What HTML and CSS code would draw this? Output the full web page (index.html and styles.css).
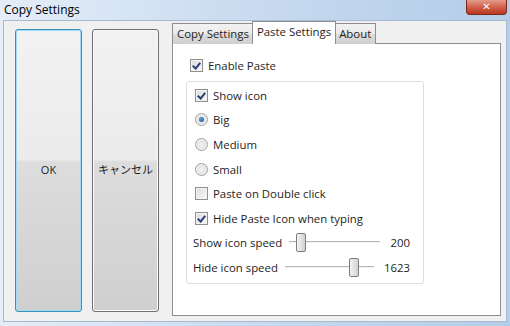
FILE: index.html
```html
<!DOCTYPE html>
<html lang="ja">
<head>
<meta charset="UTF-8" />
<title>Copy Settings</title>
<link rel="stylesheet" href="styles.css">
</head>
<body>
<div class="ventana">
  <div class="titulo">
    <span class="titulo-texto">Copy Settings</span>
    <span class="cerrar">&#x2715;</span>
  </div>

  <div class="cliente">
    <div class="botones">
      <div class="boton foco"><span>OK</span></div>
      <div class="boton"><span>キャンセル</span></div>
    </div>

    <div class="tabs">
      <div class="tab-barra">
        <div class="tab">Copy Settings</div>
        <div class="tab activa">Paste Settings</div>
        <div class="tab">About</div>
      </div>
      <div class="panel">
        <label class="opcion principal"><span class="check marcado"></span>Enable Paste</label>
        <div class="grupo">
          <label class="opcion"><span class="check marcado"></span>Show icon</label>
          <label class="opcion"><span class="radio marcado"></span>Big</label>
          <label class="opcion"><span class="radio"></span>Medium</label>
          <label class="opcion"><span class="radio"></span>Small</label>
          <label class="opcion"><span class="check"></span>Paste on Double click</label>
          <label class="opcion"><span class="check marcado"></span>Hide Paste Icon when typing</label>
          <div class="fila-slider">
            <span class="etiqueta">Show icon speed</span>
            <div class="slider"><span class="pista"></span><span class="pulgar" style="left: 8%"></span></div>
            <span class="valor">200</span>
          </div>
          <div class="fila-slider">
            <span class="etiqueta">Hide icon speed</span>
            <div class="slider"><span class="pista"></span><span class="pulgar" style="left: 72%"></span></div>
            <span class="valor">1623</span>
          </div>
        </div>
      </div>
    </div>
  </div>
</div>
</body>
</html>
```

FILE: styles.css
```css
body {
  margin: 0;
  font-family: "Open Sans", "Noto Sans CJK JP", sans-serif;
  font-size: 11.4px;
  color: #1e1e1e;
  background: #c9dbef;
}
.ventana {
  width: 510px;
  height: 326px;
  display: flex;
  flex-direction: column;
  background: linear-gradient(to right, #e4edf8, #c3d7ee 60%, #b4cde9);
}
.titulo {
  height: 20px;
  display: flex;
  justify-content: space-between;
  align-items: flex-start;
  padding-left: 4px;
  padding-right: 3px;
}
.titulo-texto {
  font-size: 12px;
  line-height: 19px;
  color: #000;
}
.cerrar {
  width: 39px;
  height: 14px;
  border: 1px solid #7d2a1e;
  border-top: none;
  border-radius: 0 0 4px 4px;
  background: linear-gradient(#e49b8c, #d2614b 50%, #b8371f);
  color: #fff;
  font-size: 10px;
  font-weight: bold;
  line-height: 13px;
  text-align: center;
  font-family: "DejaVu Sans", sans-serif;
}

/* area cliente */
.cliente {
  flex: 1;
  margin: 0 3px 4px 3px;
  border: 1px solid #a9bace;
  background: #f0f0f0;
  display: flex;
  padding: 8px 5px 5px 11px;
}
.botones {
  display: flex;
  gap: 10px;
  margin-right: 13px;
}
.boton {
  width: 65px;
  height: 281px;
  border: 1px solid #707070;
  border-radius: 3px;
  background: linear-gradient(#f2f2f2, #ebebeb 46%, #dddddd 47%, #cfcfcf);
  display: flex;
  align-items: center;
  justify-content: center;
  font-size: 11px;
  padding-bottom: 3px;
  box-sizing: content-box;
  height: 278px;
  box-shadow: inset 0 0 0 1px #fafafa;
}
.boton.foco {
  border-color: #3c8fb6;
  box-shadow: inset 0 0 0 1px #9fdcf5;
}

/* pestañas */
.tabs {
  width: 329px;
  display: flex;
  flex-direction: column;
  margin-top: -8px;
}
.tab-barra {
  display: flex;
  height: 23px;
  align-items: flex-end;
  margin-bottom: -1px;
  position: relative;
  z-index: 1;
}
.tab {
  height: 20px;
  line-height: 20px;
  padding: 0 4px;
  border: 1px solid #8c8e94;
  border-bottom: none;
  margin-right: -1px;
  background: linear-gradient(#f2f2f2, #ebebeb 50%, #dddddd 51%, #cfcfcf);
}
.tab.activa {
  height: 22px;
  line-height: 20px;
  padding: 0 4px;
  background: #fff;
  margin-left: -1px;
  margin-right: -2px;
  position: relative;
  z-index: 2;
}
.panel {
  flex: 1;
  background: #fff;
  border: 1px solid #8c8e94;
  padding: 14px 0 0 13px;
}
.opcion {
  display: flex;
  align-items: center;
  height: 24.6px;
}
.opcion.principal {
  height: 15px;
  margin: 0 0 8px 4px;
}
.check, .radio {
  width: 11px;
  height: 11px;
  border: 1px solid #8e8f8f;
  background: linear-gradient(135deg, #dcdcdc, #f8f8f8);
  box-shadow: inset 0 0 0 1px #f4f4f4;
  margin-right: 5px;
  flex-shrink: 0;
  position: relative;
}
.check.marcado::after {
  content: "";
  position: absolute;
  left: 3px;
  top: 1px;
  width: 3px;
  height: 6px;
  border: solid #2a3f7a;
  border-width: 0 2px 2px 0;
  transform: rotate(40deg);
}
.radio {
  border-radius: 50%;
  border-color: #a0a0a0;
  background: radial-gradient(#f4f4f4, #d4d4d4);
}
.radio.marcado::after {
  content: "";
  position: absolute;
  left: 3px;
  top: 3px;
  width: 5px;
  height: 5px;
  border-radius: 50%;
  background: radial-gradient(circle at 40% 40%, #5e9ee0, #1b4f8e);
}
.grupo {
  width: 228px;
  height: 200px;
  border: 1px solid #d5dfe5;
  border-radius: 3px;
  padding: 1px 0 0 8px;
  box-sizing: content-box;
}
.fila-slider {
  display: flex;
  align-items: center;
  height: 25px;
  margin-left: -2px;
  padding-right: 13px;
}
.fila-slider:first-of-type {
  margin-top: -1px;
}
.etiqueta {
  margin-right: 7px;
}
.slider {
  flex: 1;
  height: 19px;
  position: relative;
  display: flex;
  align-items: center;
  margin-right: 10px;
}
.pista {
  flex: 1;
  height: 1px;
  background: #b6b6b6;
  border-bottom: 1px solid #f2f2f2;
}
.pulgar {
  position: absolute;
  top: 0;
  width: 8px;
  height: 17px;
  border: 1px solid #7c7c7c;
  border-radius: 2px;
  background: linear-gradient(to right, #f3f3f3, #e2e2e2 50%, #d3d3d3);
}
```
